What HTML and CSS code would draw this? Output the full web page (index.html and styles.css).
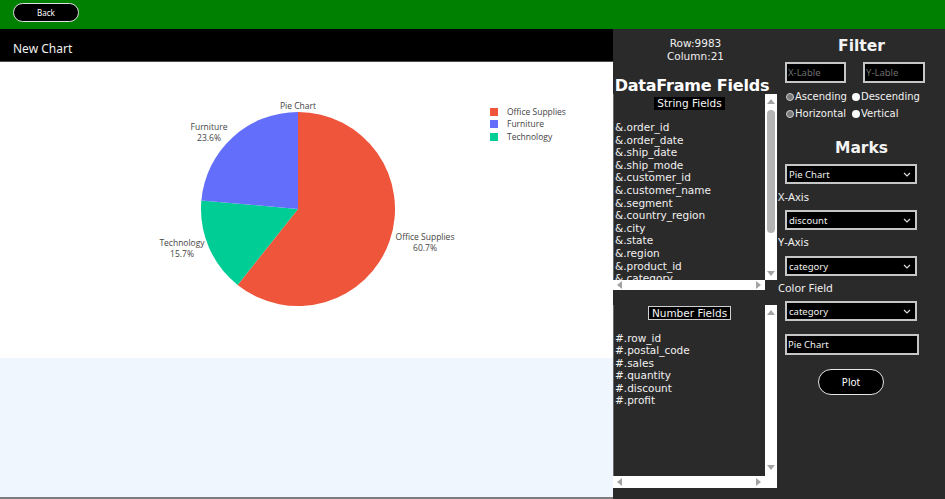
FILE: index.html
```html
<!DOCTYPE html>
<html lang="en">
<head>
<meta charset="utf-8">
<title>New Chart</title>
<link rel="stylesheet" href="styles.css">
</head>
<body>
<header class="topbar">
  <button class="back-btn">Back</button>
</header>
<div class="main">
  <section class="left">
    <div class="chart-head">New Chart</div>
    <div class="chart">
      <svg class="chart-svg" width="613" height="296" viewBox="0 0 613 296">
        <path d="M298,147 L298,50 A97,97 0 1 1 237.59,222.88 Z" fill="#EF553B"/>
        <path d="M298,147 L237.59,222.88 A97,97 0 0 1 201.38,138.48 Z" fill="#00CC96"/>
        <path d="M298,147 L201.38,138.48 A97,97 0 0 1 298,50 Z" fill="#636EFA"/>
        <g class="pie-text">
          <text x="298" y="47" text-anchor="middle">Pie Chart</text>
          <text x="209" y="68" text-anchor="middle">Furniture</text>
          <text x="209" y="79" text-anchor="middle">23.6%</text>
          <text x="182" y="184" text-anchor="middle">Technology</text>
          <text x="182" y="195" text-anchor="middle">15.7%</text>
          <text x="425" y="178" text-anchor="middle">Office Supplies</text>
          <text x="425" y="189" text-anchor="middle">60.7%</text>
        </g>
        <g class="legend">
          <rect x="490" y="46" width="8" height="8" fill="#EF553B"/>
          <rect x="490" y="58" width="8" height="8" fill="#636EFA"/>
          <rect x="490" y="71" width="8" height="8" fill="#00CC96"/>
          <text x="507" y="53">Office Supplies</text>
          <text x="507" y="65">Furniture</text>
          <text x="507" y="78">Technology</text>
        </g>
      </svg>
    </div>
    <div class="blank"></div>
  </section>

  <aside class="panel">
    <div class="fields">
      <div class="counts">
        <div>Row:9983</div>
        <div>Column:21</div>
      </div>
      <h2 class="fields-title">DataFrame Fields</h2>

      <div class="listbox string-box">
        <div class="list-view">
          <div class="list-head"><span class="tag">String Fields</span></div>
          <ul class="items">
            <li>&amp;.order_id</li>
            <li>&amp;.order_date</li>
            <li>&amp;.ship_date</li>
            <li>&amp;.ship_mode</li>
            <li>&amp;.customer_id</li>
            <li>&amp;.customer_name</li>
            <li>&amp;.segment</li>
            <li>&amp;.country_region</li>
            <li>&amp;.city</li>
            <li>&amp;.state</li>
            <li>&amp;.region</li>
            <li>&amp;.product_id</li>
            <li>&amp;.category</li>
          </ul>
        </div>
        <div class="vbar">
          <span class="arr up"></span>
          <span class="thumb"></span>
          <span class="arr down"></span>
        </div>
        <div class="hbar">
          <span class="arr left"></span>
          <span class="arr right"></span>
        </div>
        <div class="corner"></div>
      </div>

      <div class="listbox number-box">
        <div class="list-view">
          <div class="list-head"><span class="tag tag-outline">Number Fields</span></div>
          <ul class="items">
            <li>#.row_id</li>
            <li>#.postal_code</li>
            <li>#.sales</li>
            <li>#.quantity</li>
            <li>#.discount</li>
            <li>#.profit</li>
          </ul>
        </div>
        <div class="vbar">
          <span class="arr up"></span>
          <span class="arr down"></span>
        </div>
        <div class="hbar">
          <span class="arr left"></span>
          <span class="arr right"></span>
        </div>
        <div class="corner light"></div>
      </div>
    </div>

    <div class="controls">
      <h2 class="ctl-title">Filter</h2>
      <div class="label-inputs">
        <input class="txt x-lab" type="text" placeholder="X-Lable">
        <input class="txt y-lab" type="text" placeholder="Y-Lable">
      </div>
      <div class="radios">
        <span class="radio"><i class="dot off"></i>Ascending</span>
        <span class="radio"><i class="dot on"></i>Descending</span>
        <span class="radio"><i class="dot off"></i>Horizontal</span>
        <span class="radio"><i class="dot on"></i>Vertical</span>
      </div>
      <h2 class="ctl-title marks">Marks</h2>
      <div class="select s1"><span>Pie Chart</span><svg class="chev" width="8" height="5" viewBox="0 0 8 5"><path d="M1 1 L4 4 L7 1" fill="none" stroke="#ddd" stroke-width="1.2"/></svg></div>
      <div class="ctl-label l1">X-Axis</div>
      <div class="select s2"><span>discount</span><svg class="chev" width="8" height="5" viewBox="0 0 8 5"><path d="M1 1 L4 4 L7 1" fill="none" stroke="#ddd" stroke-width="1.2"/></svg></div>
      <div class="ctl-label l2">Y-Axis</div>
      <div class="select s3"><span>category</span><svg class="chev" width="8" height="5" viewBox="0 0 8 5"><path d="M1 1 L4 4 L7 1" fill="none" stroke="#ddd" stroke-width="1.2"/></svg></div>
      <div class="ctl-label l3">Color Field</div>
      <div class="select s4"><span>category</span><svg class="chev" width="8" height="5" viewBox="0 0 8 5"><path d="M1 1 L4 4 L7 1" fill="none" stroke="#ddd" stroke-width="1.2"/></svg></div>
      <input class="txt title-in" type="text" value="Pie Chart">
      <button class="plot-btn">Plot</button>
    </div>
  </aside>
</div>
</body>
</html>
```

FILE: styles.css
```css
* { box-sizing: border-box; }

html, body {
  margin: 0;
  padding: 0;
}

body {
  width: 945px;
  height: 499px;
  overflow: hidden;
  font-family: "DejaVu Sans", Verdana, sans-serif;
  background: #2b2a2a;
}

.topbar {
  height: 29px;
  background: #008000;
  display: flex;
  align-items: flex-start;
  padding: 3px 0 0 13px;
}

.back-btn {
  width: 66px;
  height: 19px;
  background: #000;
  color: #fff;
  border: 1.5px solid #e0e0e0;
  border-radius: 10px;
  font-family: "Noto Sans", sans-serif;
  font-size: 8px;
  padding: 0;
  line-height: 14px;
}

.main {
  display: flex;
  height: 470px;
}

.left {
  width: 613px;
  display: flex;
  flex-direction: column;
}

.chart-head {
  height: 33px;
  background: #000;
  color: #f2f2f2;
  font-family: "Noto Sans", sans-serif;
  font-size: 12px;
  line-height: 16px;
  padding: 12px 0 0 13px;
  border-bottom: 1px solid #4a4a4a;
}

.chart {
  height: 296px;
  background: #fff;
}

.chart-svg { display: block; }

.pie-text text,
.legend text {
  font-family: "Open Sans", sans-serif;
  font-size: 8.5px;
  fill: #444;
}

.blank {
  flex: 1;
  background: #eff6fd;
  border-bottom: 2px solid #7d7d7d;
}

.panel {
  width: 332px;
  background: #2b2a2a;
  display: flex;
  color: #fff;
}

.fields {
  width: 165px;
}

.counts {
  margin-top: 8px;
  text-align: center;
  font-size: 10.5px;
  line-height: 13px;
  color: #f0f0f0;
}

.fields-title {
  margin: 14px 0 0 0;
  padding-right: 7px;
  font-size: 16px;
  line-height: 17px;
  font-weight: bold;
  text-align: center;
  white-space: nowrap;
  letter-spacing: -0.2px;
}

.listbox {
  width: 164px;
  display: grid;
  grid-template-columns: 1fr 12px;
}

.string-box {
  height: 196px;
  grid-template-rows: 1fr 10px;
}

.number-box {
  margin-top: 15px;
  height: 183px;
  grid-template-rows: 1fr 12px;
}

.list-view {
  overflow: hidden;
  background: #2b2a2a;
  border-left: 1px solid #6a6a6a;
}

.list-head {
  text-align: center;
  padding-top: 1px;
  height: 14px;
  line-height: 13px;
}

.number-box .list-head { padding-top: 0; }

.tag {
  display: inline-block;
  background: #000;
  font-size: 10.5px;
  line-height: 13px;
  padding: 0 3px;
  color: #f4f4f4;
}

.tag-outline {
  border: 1px solid #cfcfcf;
  line-height: 12px;
}

.items {
  list-style: none;
  margin: 0;
  padding: 13px 0 0 1px;
  font-size: 10.5px;
  line-height: 12.6px;
  color: #f0f0f0;
  white-space: nowrap;
}

.number-box .items { padding-top: 12.5px; }

.vbar {
  background: #fff;
  display: flex;
  flex-direction: column;
  align-items: center;
  padding: 5px 0 4px;
}

.number-box .vbar { padding: 5px 0 6px; }

.thumb {
  width: 8px;
  height: 123px;
  margin-top: 6px;
  border-radius: 4px;
  background: #b4b4b4;
}

.arr {
  display: block;
  width: 0;
  height: 0;
}

.arr.up {
  border-left: 4px solid transparent;
  border-right: 4px solid transparent;
  border-bottom: 5px solid #a3a3a3;
}

.arr.down {
  margin-top: auto;
  border-left: 4px solid transparent;
  border-right: 4px solid transparent;
  border-top: 5px solid #a3a3a3;
}

.hbar {
  background: #fff;
  display: flex;
  justify-content: space-between;
  align-items: center;
  padding: 0 4px;
}

.arr.left {
  border-top: 4px solid transparent;
  border-bottom: 4px solid transparent;
  border-right: 5px solid #a3a3a3;
}

.arr.right {
  border-top: 4px solid transparent;
  border-bottom: 4px solid transparent;
  border-left: 5px solid #a3a3a3;
}

.corner { background: #2b2a2a; }
.corner.light { background: #fff; }

.controls {
  width: 167px;
  display: flex;
  flex-direction: column;
  align-items: flex-start;
}

.ctl-title {
  margin: 8px 0 0 0;
  width: 100%;
  text-align: center;
  font-size: 15.5px;
  line-height: 18px;
  font-weight: bold;
  color: #f4f4f4;
}

.ctl-title.marks { margin-top: 19px; }

.label-inputs {
  margin: 7px 0 0 7px;
  display: flex;
  gap: 17px;
}

.txt {
  height: 21px;
  background: #000;
  border: 2px solid #c6c6c6;
  color: #f0f0f0;
  font-family: "Noto Sans", sans-serif;
  font-size: 9.5px;
  padding: 0 1px;
  outline: none;
}

.txt::placeholder { color: #6e6e6e; }

.x-lab { width: 61px; }
.y-lab { width: 62px; }

.radios {
  margin: 7px 0 0 8px;
  display: grid;
  grid-template-columns: 66px auto;
  row-gap: 4px;
  font-size: 10px;
  line-height: 13px;
  color: #f2f2f2;
}

.radio {
  display: flex;
  align-items: center;
  white-space: nowrap;
}

.dot {
  display: inline-block;
  width: 8px;
  height: 8px;
  border-radius: 50%;
  margin-right: 1px;
}

.dot.off {
  background: #7a7a7a;
  border: 1.5px solid #cfcfcf;
}

.dot.on {
  background: #fafafa;
}

.select {
  margin: 7px 0 0 7px;
  width: 132px;
  height: 20px;
  background: #000;
  border: 2px solid #c6c6c6;
  display: flex;
  align-items: center;
  justify-content: space-between;
  padding: 0 4px 0 2px;
  font-family: "Noto Sans", sans-serif;
  font-size: 9.5px;
  color: #f0f0f0;
}

.select.s2 { margin-top: 6px; }
.select.s3 { margin-top: 7px; }
.select.s4 { margin-top: 6px; }

.ctl-label {
  font-family: "Noto Sans", sans-serif;
  font-size: 11px;
  line-height: 14px;
  color: #f0f0f0;
  margin-top: 5px;
}

.ctl-label.l1 { margin-top: 6px; }

.title-in {
  margin: 13px 0 0 7px;
  width: 134px;
}

.plot-btn {
  margin: 14px 0 0 40px;
  width: 66px;
  height: 26px;
  background: #000;
  color: #fff;
  border: 1.5px solid #e6e6e6;
  border-radius: 13px;
  font-family: "Noto Sans", sans-serif;
  font-size: 10px;
  padding: 0;
}
```
